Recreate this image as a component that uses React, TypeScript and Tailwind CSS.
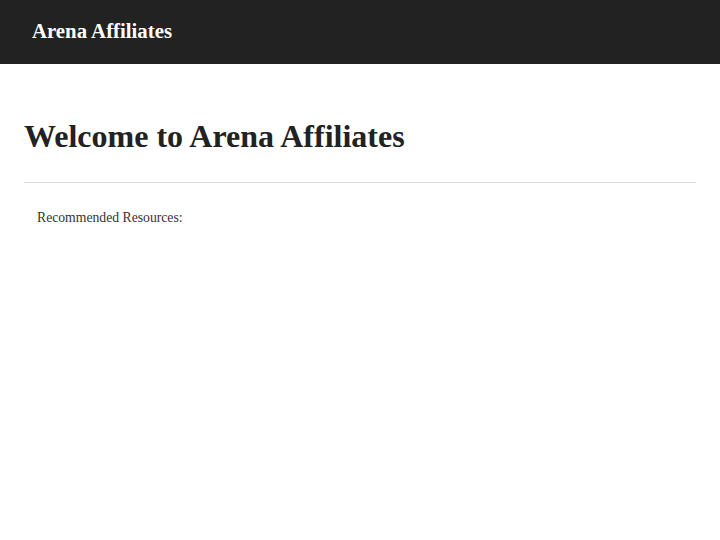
export default function App() {
  return (
    <div className="min-h-[540px] bg-white" style={{ fontFamily: '"Liberation Serif", serif' }}>
      <header className="h-16 bg-[#222222] px-8 flex items-center pb-[3px]">
        <span className="text-white text-[20.8px] font-bold">Arena Affiliates</span>
      </header>
      <main className="px-6 pt-[54px]">
        <h1 className="text-[32px] font-bold text-[#222222] leading-[37px]">Welcome to Arena Affiliates</h1>
        <div className="mt-[27px] h-px bg-[#e0e0e0]" />
        <div className="pl-[13px] pt-[25px] text-[13.7px] text-[#333333]">Recommended Resources:</div>
      </main>
    </div>
  );
}
